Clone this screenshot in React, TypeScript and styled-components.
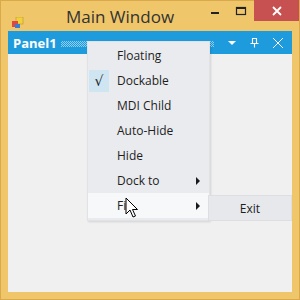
import React from 'react';
import styled, { createGlobalStyle } from 'styled-components';

const Global = createGlobalStyle`
  html, body { margin: 0; padding: 0; }
  body { width: 300px; height: 300px; overflow: hidden; font-family: "Open Sans", "Noto Sans", sans-serif; }
`;

const Frame = styled.div`
  position: relative;
  width: 300px;
  height: 300px;
  box-sizing: border-box;
  background: #efc66a;
  border: 1px solid #d9a94c;
  display: flex;
  flex-direction: column;
`;

const TitleBar = styled.div`
  height: 30px;
  display: flex;
  align-items: flex-start;
  position: relative;
`;

const AppIcon = styled.div`
  width: 12px;
  height: 12px;
  margin: 11px 0 0 11px;
`;

const Title = styled.div`
  position: absolute;
  left: 65px;
  top: 4px;
  font-size: 17px;
  color: #333;
`;

const Controls = styled.div`
  margin-left: auto;
  display: flex;
  height: 20px;
  position: relative;
  top: -1px;
`;

const CtlButton = styled.div<{ $w: number; $bg?: string }>`
  width: ${p => p.$w}px;
  height: 21px;
  background: ${p => p.$bg || 'transparent'};
  display: flex;
  align-items: center;
  justify-content: center;
`;

const Client = styled.div`
  flex: 1;
  margin: 0 7px 7px 7px;
  background: #f0f0f0;
  display: flex;
  flex-direction: column;
`;

const PanelHeader = styled.div`
  height: 23px;
  background: #1e9bdc;
  display: flex;
  align-items: center;
  padding: 0 3px 0 5px;
`;

const PanelTitle = styled.span`
  color: #fff;
  font-weight: 700;
  font-size: 13px;
`;

const Dots = styled.div`
  flex: 1;
  height: 6px;
  margin: 2px 6px 0 4px;
  background-image: conic-gradient(rgba(255,255,255,0.5) 25%, transparent 0 50%, rgba(255,255,255,0.5) 0 75%, transparent 0);
  background-size: 2px 2px;
`;

const HeaderTool = styled.div`
  width: 23px;
  height: 23px;
  display: flex;
  align-items: center;
  justify-content: center;
`;

const Menu = styled.div`
  position: absolute;
  left: 86px;
  top: 40px;
  width: 121px;
  background: #e9ebee;
  border: 1px solid #e0e2e5;
  box-shadow: 1px 1px 2px rgba(0,0,0,0.12);
  padding: 1px 0 2px;
  display: flex;
  flex-direction: column;
`;

const Item = styled.div<{ $hot?: boolean }>`
  height: 25px;
  display: flex;
  align-items: center;
  position: relative;
  background: ${p => (p.$hot ? '#f7f8fa' : 'transparent')};
  font-size: 12px;
  color: #1e1e1e;
`;

const Gutter = styled.div<{ $checked?: boolean }>`
  width: 20px;
  height: 22px;
  margin: 0 8px 0 1px;
  background: ${p => (p.$checked ? '#cfe6f2' : 'transparent')};
  display: flex;
  align-items: center;
  justify-content: center;
  font-size: 14px;
  font-family: "DejaVu Sans", sans-serif;
`;

const Arrow = styled.div`
  position: absolute;
  right: 9px;
  top: 9px;
  width: 0;
  height: 0;
  border-top: 4px solid transparent;
  border-bottom: 4px solid transparent;
  border-left: 4px solid #1a1a1a;
`;

const SubMenu = styled.div`
  position: absolute;
  left: 207px;
  top: 194px;
  width: 84px;
  height: 26px;
  background: #e6e8eb;
  border: 1px solid #dcdee1;
  box-sizing: border-box;
  display: flex;
  align-items: center;
  justify-content: center;
  font-size: 12px;
  color: #1e1e1e;
`;

const Cursor = styled.svg`
  position: absolute;
  left: 124px;
  top: 196px;
`;

const items = [
  { label: 'Floating' },
  { label: 'Dockable', checked: true },
  { label: 'MDI Child' },
  { label: 'Auto-Hide' },
  { label: 'Hide' },
  { label: 'Dock to', sub: true },
  { label: 'Fi', sub: true, hot: true },
];

export default function App() {
  return (
    <Frame>
      <Global />
      <TitleBar>
        <AppIcon>
          <svg width="12" height="12" viewBox="0 0 12 12">
            <rect x="4" y="0" width="7" height="7" fill="#f2d23c" stroke="#b8952a" strokeWidth="0.6" />
            <rect x="0" y="4" width="6" height="6" fill="#e0483f" />
            <rect x="3" y="7" width="5" height="4" fill="#3a7bd5" />
          </svg>
        </AppIcon>
        <Title>Main Window</Title>
        <Controls>
          <CtlButton $w={26}>
            <svg width="10" height="10" viewBox="0 0 10 10"><rect x="1" y="6" width="8" height="2" fill="#222" /></svg>
          </CtlButton>
          <CtlButton $w={26}>
            <svg width="12" height="10" viewBox="0 0 12 10"><rect x="1.5" y="1.5" width="9" height="7" fill="none" stroke="#222" strokeWidth="1.2" /><rect x="1" y="1" width="10" height="2" fill="#222" /></svg>
          </CtlButton>
          <CtlButton $w={45} $bg="#c75050">
            <svg width="10" height="10" viewBox="0 0 10 10"><path d="M1 1 L9 9 M9 1 L1 9" stroke="#fff" strokeWidth="1.8" /></svg>
          </CtlButton>
        </Controls>
      </TitleBar>
      <Client>
        <PanelHeader>
          <PanelTitle>Panel1</PanelTitle>
          <Dots />
          <HeaderTool>
            <svg width="10" height="6" viewBox="0 0 10 6"><path d="M1 1 L9 1 L5 5 Z" fill="#fff" /></svg>
          </HeaderTool>
          <HeaderTool>
            <svg width="11" height="11" viewBox="0 0 11 11">
              <path d="M3 1.5 H8 M3.5 1.5 V6.5 M7.5 1.5 V6.5 M1.5 6.5 H9.5 M5.5 6.5 V10.5" stroke="#fff" strokeWidth="1.1" fill="none" />
            </svg>
          </HeaderTool>
          <HeaderTool>
            <svg width="12" height="12" viewBox="0 0 12 12"><path d="M1 1 L11 11 M11 1 L1 11" stroke="#fff" strokeWidth="1" /></svg>
          </HeaderTool>
        </PanelHeader>
      </Client>
      <Menu>
        {items.map(it => (
          <Item key={it.label} $hot={it.hot}>
            <Gutter $checked={it.checked}>{it.checked ? '√' : ''}</Gutter>
            {it.label}
            {it.sub && <Arrow />}
          </Item>
        ))}
      </Menu>
      <SubMenu>Exit</SubMenu>
      <Cursor width="14" height="22" viewBox="0 0 14 22">
        <path d="M1 1 L1 17 L5 13 L8 20 L10.5 19 L7.5 12.5 L12.5 12.5 Z" fill="#fff" stroke="#000" strokeWidth="1" strokeLinejoin="round" />
      </Cursor>
    </Frame>
  );
}
